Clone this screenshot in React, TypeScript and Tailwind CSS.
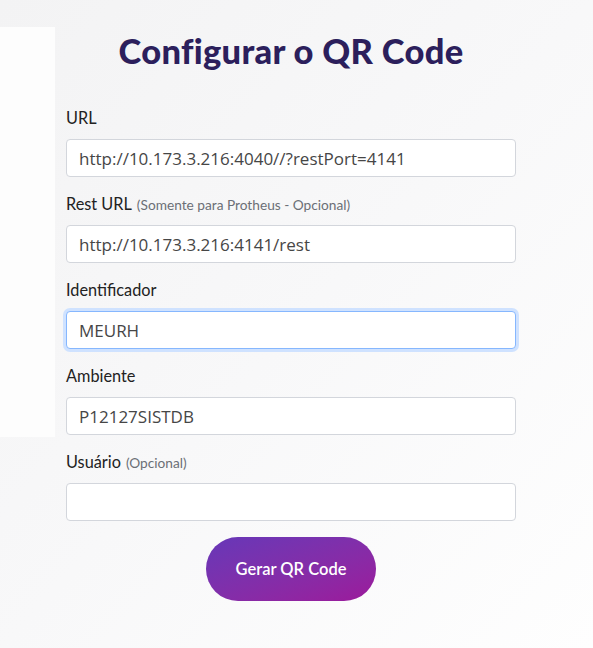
import React from "react";

const fields = [
  { label: "URL", hint: "", value: "http://10.173.3.216:4040//?restPort=4141", focused: false },
  { label: "Rest URL", hint: "(Somente para Protheus - Opcional)", value: "http://10.173.3.216:4141/rest", focused: false },
  { label: "Identificador", hint: "", value: "MEURH", focused: true },
  { label: "Ambiente", hint: "", value: "P12127SISTDB", focused: false },
  { label: "Usuário", hint: "(Opcional)", value: "", focused: false },
];

export default function App() {
  return (
    <div className="relative min-h-[648px] w-full overflow-hidden bg-gradient-to-br from-[#f3f3f4] via-[#f8f8f9] to-[#fefefe] font-['Lato',sans-serif]">
      {/* faint decoration on the left */}
      <div className="absolute left-0 top-[27px] h-[410px] w-[55px] bg-[#fdfdfd]" />

      <div className="relative ml-[66px] flex w-[450px] flex-col pt-[30px]">
        <h1 className="mb-[35px] h-[42px] text-center text-[34.5px] font-black leading-[42px] tracking-[0.3px] text-[#2c1f5c]">
          Configurar o QR Code
        </h1>

        {fields.map((f) => (
          <div key={f.label} className="mb-[16px] flex flex-col">
            <label className="mb-[11px] h-[21px] text-[16.3px] leading-[21px] text-[#222]">
              {f.label}
              {f.hint && <span className="ml-[5px] text-[13.7px] text-[#6b6f76]">{f.hint}</span>}
            </label>
            <input
              readOnly
              value={f.value}
              className={
                f.focused
                  ? "h-[38px] w-full rounded-[4px] border border-[#86b7fe] bg-white px-[12px] font-['Open_Sans',sans-serif] text-[17px] text-[#464646] shadow-[0_0_0_3px_#cfe2ff] outline-none"
                  : "h-[38px] w-full rounded-[4px] border border-[#d3d6dc] bg-white px-[12px] font-['Open_Sans',sans-serif] text-[17px] text-[#464646] outline-none"
              }
            />
          </div>
        ))}

        <div className="flex justify-center">
          <button className="h-[64px] w-[170px] rounded-full bg-gradient-to-br from-[#6637b8] to-[#9c189b] text-[16.5px] font-semibold text-white">
            Gerar QR Code
          </button>
        </div>
      </div>
    </div>
  );
}
